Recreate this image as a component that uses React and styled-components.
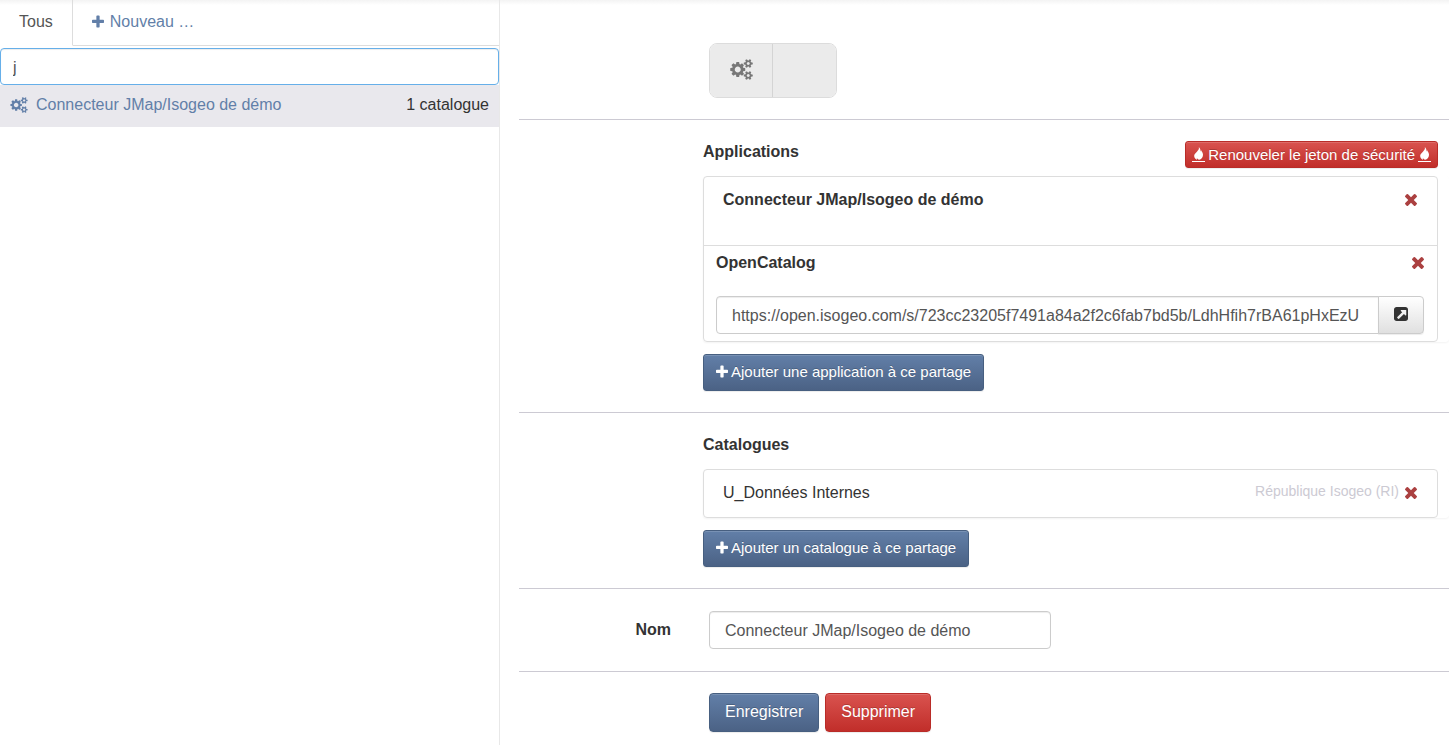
import React, { useState } from 'react';
import styled, { createGlobalStyle, css } from 'styled-components';

const cogsPath = 'M896 896q0-106-75-181t-181-75-181 75-75 181 75 181 181 75 181-75 75-181zm768 512q0-52-38-90t-90-38-90 38-38 90q0 53 37.5 90.5t90.5 37.5 90.5-37.5 37.5-90.5zm0-1024q0-52-38-90t-90-38-90 38-38 90q0 53 37.5 90.5t90.5 37.5 90.5-37.5 37.5-90.5zm-384 421v185q0 10-7 19.5t-16 10.5l-155 24q-11 35-32 76 34 48 90 115 7 11 7 20 0 12-7 19-23 30-82.5 89.5t-78.5 59.5q-11 0-21-7l-115-90q-37 19-77 31-11 108-23 155-7 24-30 24h-186q-11 0-20-7.5t-10-17.5l-23-153q-34-10-75-31l-118 89q-7 7-20 7-11 0-21-8-144-133-144-160 0-9 7-19 10-14 41-53t47-61q-23-44-35-82l-152-24q-10-1-17-9.5t-7-19.5v-185q0-10 7-19.5t16-10.5l155-24q11-35 32-76-34-48-90-115-7-11-7-20 0-12 7-20 22-30 82-89t79-59q11 0 21 7l115 90q34-18 77-32 11-108 23-154 7-24 30-24h186q11 0 20 7.5t10 17.5l23 153q34 10 75 31l118-89q8-7 20-7 11 0 21 8 144 133 144 160 0 8-7 19-12 16-42 54t-45 60q23 48 34 82l152 23q10 2 17 10.5t7 19.5zm640 533v140q0 16-149 31-12 27-30 52 51 113 51 138 0 4-4 7-122 71-124 71-8 0-46-47t-52-68q-20 2-30 2t-30-2q-14 21-52 68t-46 47q-2 0-124-71-4-3-4-7 0-25 51-138-18-25-30-52-149-15-149-31v-140q0-16 149-31 13-29 30-52-51-113-51-138 0-4 4-7 4-2 35-20t59-34 30-16q8 0 46 46.5t52 67.5q20-2 30-2t30 2q51-71 92-112l6-2q4 0 124 70 4 3 4 7 0 25-51 138 17 23 30 52 149 15 149 31zm0-1024v140q0 16-149 31-12 27-30 52 51 113 51 138 0 4-4 7-122 71-124 71-8 0-46-47t-52-68q-20 2-30 2t-30-2q-14 21-52 68t-46 47q-2 0-124-71-4-3-4-7 0-25 51-138-18-25-30-52-149-15-149-31v-140q0-16 149-31 13-29 30-52-51-113-51-138 0-4 4-7 4-2 35-20t59-34 30-16q8 0 46 46.5t52 67.5q20-2 30-2t30 2q51-71 92-112l6-2q4 0 124 70 4 3 4 7 0 25-51 138 17 23 30 52 149 15 149 31z';
const plusPath = 'M1600 736v192q0 40-28 68t-68 28h-416v416q0 40-28 68t-68 28h-192q-40 0-68-28t-28-68v-416h-416q-40 0-68-28t-28-68v-192q0-40 28-68t68-28h416v-416q0-40 28-68t68-28h192q40 0 68 28t28 68v416h416q40 0 68 28t28 68z';
const timesPath = 'M1490 1322q0 40-28 68l-136 136q-28 28-68 28t-68-28l-294-294-294 294q-28 28-68 28t-68-28l-136-136q-28-28-28-68t28-68l294-294-294-294q-28-28-28-68t28-68l136-136q28-28 68-28t68 28l294 294 294-294q28-28 68-28t68 28l136 136q28 28 28 68t-28 68l-294 294 294 294q28 28 28 68z';
const externalPath = 'M1472 992v-480q0-26-19-45t-45-19h-480q-42 0-59 39-17 41 14 70l144 144-534 534q-19 19-19 45t19 45l102 102q19 19 45 19t45-19l534-534 144 144q18 19 45 19 12 0 25-5 39-17 39-59zm192-576v960q0 119-84.5 203.5t-203.5 84.5h-960q-119 0-203.5-84.5t-84.5-203.5v-960q0-119 84.5-203.5t203.5-84.5h960q119 0 203.5 84.5t84.5 203.5z';

const Cogs = ({ size }) => (
    <Icon viewBox="0 0 1920 1792" $width={size} $height={size - 2} aria-hidden="true">
        <path d={cogsPath}/>
    </Icon>
)

const Plus = () => (
    <Icon viewBox="192 128 1408 1536" $width={12} $height={14} aria-hidden="true">
        <path d={plusPath}/>
    </Icon>
)

const Times = () => (
    <Icon viewBox="302 366 1188 1188" $width={12} $height={12} aria-hidden="true">
        <path d={timesPath}/>
    </Icon>
)

const External = () => (
    <Icon viewBox="128 128 1536 1536" $width={14} $height={14} aria-hidden="true">
        <path d={externalPath}/>
    </Icon>
)

const Flame = () => (
    <Icon viewBox="0 0 13 16" $width={13} $height={16} aria-hidden="true">
        <path d="M6.8 0C7.4 2 6.4 3.2 4.9 4.7C3.2 6.3 2 7.5 2.2 9.3C2.4 11 3.6 12.2 5.2 13C4.6 11.6 4.8 10.4 5.8 9.3C6.4 8.6 6.8 8.2 7 7.4C7.6 8.6 7.6 9.8 7 11C6.7 11.7 6.5 12.3 6.6 13C9.6 12 11.2 10 11 7.4C10.8 5.3 9.5 4.5 9.3 3.2C8.8 3.6 8.7 4.2 8.7 4.8C8.5 2.8 8.1 1.1 6.8 0Z"/>
        <path d="M4 8L7 4L9.5 6.5L8.5 10.5L6.5 12.5L4.5 11Z"/>
        <rect x="0" y="14" width="13" height="1"/>
    </Icon>
)

const App = () => {

    const [search, setSearch] = useState('j');
    const [name, setName] = useState('Connecteur JMap/Isogeo de démo');

    return (
        <Page>
            <GlobalStyle/>
            <Sidebar>
                <Tabs>
                    <Tab href="#tous" $active>Tous</Tab>
                    <Tab href="#nouveau"><Plus/>Nouveau …</Tab>
                </Tabs>
                <SearchInput
                    type="text"
                    aria-label="Rechercher"
                    value={search}
                    onChange={(e) => setSearch(e.target.value)}
                />
                <ShareRow href="#partage">
                    <Cogs size={18}/>
                    <ShareName>Connecteur JMap/Isogeo de démo</ShareName>
                    <ShareCount>1 catalogue</ShareCount>
                </ShareRow>
            </Sidebar>
            <Main>
                <Section $top={43} $bottom={21}>
                    <Controls>
                        <TypeGroup>
                            <TypeButton type="button" aria-label="Application"><Cogs size={23}/></TypeButton>
                            <TypeButton type="button" aria-label="Groupe"/>
                        </TypeGroup>
                    </Controls>
                </Section>
                <Section $top={21} $bottom={21}>
                    <Content>
                        <Heading>
                            <Title>Applications</Title>
                            <Button type="button" $danger $size="small">
                                <Flame/>Renouveler le jeton de sécurité<Flame/>
                            </Button>
                        </Heading>
                        <Shell>
                            <Panel>
                                <Item $tall>
                                    <Strong>Connecteur JMap/Isogeo de démo</Strong>
                                    <Remove type="button" aria-label="Retirer le connecteur"><Times/></Remove>
                                </Item>
                                <Catalog>
                                    <CatalogHead>
                                        <Strong as="label" htmlFor="opencatalog">OpenCatalog</Strong>
                                        <Remove type="button" aria-label="Retirer OpenCatalog"><Times/></Remove>
                                    </CatalogHead>
                                    <InputGroup>
                                        <Input
                                            id="opencatalog"
                                            type="text"
                                            readOnly
                                            $joined
                                            value="https://open.isogeo.com/s/723cc23205f7491a84a2f2c6fab7bd5b/LdhHfih7rBA61pHxEzU"
                                        />
                                        <OpenButton type="button" aria-label="Ouvrir"><External/></OpenButton>
                                    </InputGroup>
                                </Catalog>
                            </Panel>
                        </Shell>
                        <Button type="button" $size="medium"><Plus/>Ajouter une application à ce partage</Button>
                    </Content>
                </Section>
                <Section $top={21} $bottom={21}>
                    <Content>
                        <Heading>
                            <Title>Catalogues</Title>
                        </Heading>
                        <Shell>
                            <Panel>
                                <Item>
                                    <span>U_Données Internes</span>
                                    <Owner>République Isogeo (RI)</Owner>
                                    <Remove type="button" aria-label="Retirer le catalogue"><Times/></Remove>
                                </Item>
                            </Panel>
                        </Shell>
                        <Button type="button" $size="medium"><Plus/>Ajouter un catalogue à ce partage</Button>
                    </Content>
                </Section>
                <Section $top={22} $bottom={22}>
                    <Label htmlFor="nom">Nom</Label>
                    <Controls>
                        <NameInput
                            id="nom"
                            type="text"
                            value={name}
                            onChange={(e) => setName(e.target.value)}
                        />
                    </Controls>
                </Section>
                <Section $top={21} $bottom={12} $last>
                    <Controls>
                        <Button type="button">Enregistrer</Button>
                        <Button type="button" $danger>Supprimer</Button>
                    </Controls>
                </Section>
            </Main>
        </Page>
    )
}

export default App

const GlobalStyle = createGlobalStyle`
    * {
        box-sizing: border-box;
    }

    body {
        margin: 0;
        background: #ffffff;
        color: #333333;
        font-family: "Liberation Sans", Arial, sans-serif;
        font-size: 16px;
        line-height: 22px;
    }

    button, input {
        margin: 0;
        font-family: inherit;
        font-size: 16px;
    }
`;

const Icon = styled.svg`
    flex: none;
    width: ${({ $width }) => $width}px;
    height: ${({ $height }) => $height}px;
    fill: currentColor;
`;

const Page = styled.div`
    display: grid;
    grid-template-columns: minmax(300px, 500px) minmax(0, 1fr);
    min-height: 100vh;
    background: linear-gradient(#f3f3f3, #ffffff 5px);
`;

const Sidebar = styled.aside`
    border-right: 1px solid #e8e8e8;
`;

const Tabs = styled.nav`
    display: flex;
    margin-bottom: 2px;

    &::after {
        content: "";
        flex: 1;
        border-bottom: 1px solid #dddddd;
    }
`;

const Tab = styled.a`
    display: flex;
    align-items: center;
    gap: 6px;
    height: 46px;
    padding: 0 19px 2px;
    border-bottom: 1px solid #dddddd;
    color: #627fa8;
    text-decoration: none;

    ${({ $active }) => $active && css`
        border-right: 1px solid #dddddd;
        border-bottom-color: transparent;
        color: #555555;
    `}
`;

const SearchInput = styled.input`
    display: block;
    width: 100%;
    height: 37px;
    padding: 2px 12px 0;
    border: 1px solid #66afe9;
    border-radius: 4px;
    outline: none;
    box-shadow: inset 0 1px 1px rgba(0, 0, 0, 0.075);
    color: #555555;
`;

const ShareRow = styled.a`
    display: flex;
    align-items: center;
    height: 42px;
    padding: 0 10px 2px;
    background: #e9e8ed;
    color: #627fa8;
    text-decoration: none;
`;

const ShareName = styled.span`
    flex: 1;
    margin-left: 8px;
`;

const ShareCount = styled.span`
    color: #333333;
`;

const Main = styled.main`
    padding-left: 19px;
`;

const Section = styled.section`
    display: grid;
    grid-template-columns: 184px minmax(0, 1fr);
    padding: ${({ $top, $bottom }) => `${$top}px 0 ${$bottom}px`};
    border-bottom: ${({ $last }) => $last ? 'none' : '1px solid #cccad3'};
`;

const Content = styled.div`
    grid-column: 2;
`;

const Controls = styled.div`
    grid-column: 2;
    display: flex;
    gap: 6px;
    padding: 0 11px 0 6px;
`;

const TypeGroup = styled.div`
    display: flex;
    overflow: hidden;
    border: 1px solid #dcdcdc;
    border-radius: 8px;
`;

const TypeButton = styled.button`
    display: flex;
    align-items: center;
    justify-content: center;
    width: 63px;
    height: 53px;
    padding: 0 0 2px;
    border: none;
    background: #ebebeb;
    color: #777777;

    &:first-child {
        border-right: 1px solid #d4d4d4;
    }
`;

const Heading = styled.div`
    display: flex;
    align-items: center;
    justify-content: space-between;
    height: 27px;
    margin-bottom: 8px;
    padding-right: 11px;
`;

const Title = styled.h2`
    margin: 0 0 5px;
    font-size: 16px;
`;

const Shell = styled.div`
    margin-bottom: 12px;
    padding-right: 11px;
    border-radius: 4px;
    box-shadow: 0 1px 2px rgba(0, 0, 0, 0.05);
`;

const Panel = styled.div`
    border: 1px solid #dddddd;
    border-radius: 4px;
    background: #ffffff;
`;

const Item = styled.div`
    display: flex;
    align-items: flex-start;
    height: ${({ $tall }) => $tall ? 69 : 47}px;
    padding: 12px 20px 0 19px;
    border-bottom: ${({ $tall }) => $tall ? '1px solid #dddddd' : 'none'};
`;

const Strong = styled.strong`
    font-weight: bold;
`;

const Owner = styled.span`
    margin-left: auto;
    margin-right: 6px;
    color: #cccad3;
    font-size: 14px;
    line-height: 18px;
`;

const Remove = styled.button`
    display: flex;
    align-items: center;
    height: 22px;
    padding: 0;
    border: none;
    background: none;
    color: #ab4040;

    ${Strong} + & {
        margin-left: auto;
    }
`;

const Catalog = styled.div`
    padding: 6px 13px 7px 12px;
`;

const CatalogHead = styled.div`
    display: flex;
    align-items: flex-start;
    margin-bottom: 22px;
`;

const InputGroup = styled.div`
    display: flex;
`;

const Input = styled.input`
    flex: 1;
    min-width: 0;
    height: 38px;
    padding: 2px 15px 0;
    border: 1px solid #cccccc;
    border-radius: ${({ $joined }) => $joined ? '4px 0 0 4px' : '4px'};
    background: #ffffff;
    box-shadow: inset 0 1px 1px rgba(0, 0, 0, 0.075);
    color: #555555;
`;

const NameInput = styled(Input)`
    max-width: 342px;
`;

const OpenButton = styled.button`
    display: flex;
    align-items: center;
    justify-content: center;
    width: 46px;
    height: 38px;
    margin-left: -1px;
    padding: 0 0 2px;
    border: 1px solid #cccccc;
    border-radius: 0 4px 4px 0;
    background: linear-gradient(#ffffff, #e0e0e0);
    box-shadow: 0 1px 1px rgba(0, 0, 0, 0.075);
    color: #333333;
`;

const Button = styled.button`
    display: flex;
    align-items: center;
    gap: 3px;
    height: 39px;
    padding: 0 15px 2px;
    border: 1px solid ${({ $danger }) => $danger ? '#b92c28' : '#475f80'};
    border-radius: 4px;
    background: ${({ $danger }) => $danger
        ? 'linear-gradient(#d9534f, #c12e2a)'
        : 'linear-gradient(#627fa8, #4b6285)'};
    box-shadow: inset 0 1px 0 rgba(255, 255, 255, 0.15), 0 1px 1px rgba(0, 0, 0, 0.075);
    color: #ffffff;
    text-shadow: 0 -1px 0 rgba(0, 0, 0, 0.2);
    white-space: nowrap;

    ${({ $size }) => $size === 'medium' && css`
        height: 37px;
        padding: 0 12px 2px;
        border-radius: 3px;
        font-size: 15px;
    `}

    ${({ $size }) => $size === 'small' && css`
        height: 27px;
        padding: 0 6px;
        border-radius: 3px;
        font-size: 15px;
    `}
`;

const Label = styled.label`
    padding: 8px 32px 0 0;
    font-weight: bold;
    text-align: right;
`;
